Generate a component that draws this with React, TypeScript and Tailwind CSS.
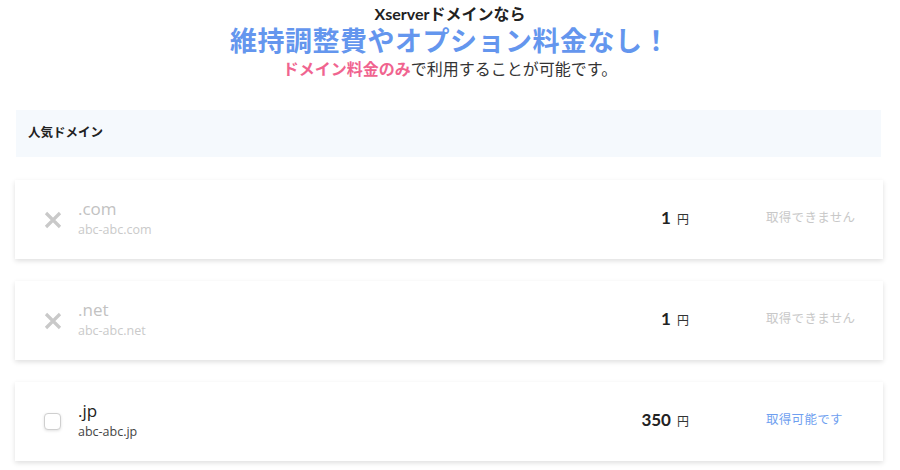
import React from "react"

type Domain = {
  tld: string
  sample: string
  price: string
  available: boolean
}

const domains: Domain[] = [
  { tld: ".com", sample: "abc-abc.com", price: "1", available: false },
  { tld: ".net", sample: "abc-abc.net", price: "1", available: false },
  { tld: ".jp", sample: "abc-abc.jp", price: "350", available: true },
]

const font = "font-['Lato','Noto_Sans_CJK_JP',sans-serif]"
const nameFont = "font-['Open_Sans','Noto_Sans_CJK_JP',sans-serif]"

function DomainCard({ d }: { d: Domain }) {
  return (
    <div className="ml-[15px] mr-[17px] h-[79px] bg-white shadow-[0_2px_5px_rgba(0,0,0,0.13)] flex items-center">
      {/* Icon */}
      <div className="w-[63px] pl-[27px] flex items-center">
        {d.available ? (
          <div className="ml-[2px] w-[17px] h-[17px] rounded-[4px] border border-[#cfcfcf] bg-white shadow-[0_1px_3px_rgba(0,0,0,0.12)]" />
        ) : (
          <svg width="22" height="22" viewBox="0 0 22 22">
            <path d="M4 4 L18 18 M18 4 L4 18" stroke="#c9c9c9" strokeWidth="3.2" strokeLinecap="butt" />
          </svg>
        )}
      </div>

      {/* Name */}
      <div className={`flex-1 flex flex-col -mt-[1px] ${nameFont}`}>
        <span className={`text-[17px] leading-[20px] font-medium ${d.available ? "text-[#222]" : "text-[#c2c2c2]"}`}>
          {d.tld}
        </span>
        <span className={`text-[12.5px] leading-[18px] mt-[2px] ${d.available ? "text-[#444]" : "text-[#cacaca]"}`}>
          {d.sample}
        </span>
      </div>

      {/* Price */}
      <div className="flex items-baseline gap-[6px] -mt-[3px]">
        <span className="text-[17px] font-bold text-[#222]">{d.price}</span>
        <span className="text-[12px] text-[#333]">円</span>
      </div>

      {/* Status */}
      <div className={`w-[117px] ml-[77px] -mt-[3px] text-[12.5px] tracking-[0.3px] ${d.available ? "text-[#6f9ff0]" : "text-[#c8c8c8]"}`}>
        {d.available ? "取得可能です" : "取得できません"}
      </div>
    </div>
  )
}

export default function App() {
  return (
    <div className={`w-[900px] h-[470px] bg-white overflow-hidden ${font}`}>
      {/* Heading */}
      <div className="text-center pt-[4px]">
        <p className="text-[16px] leading-[20px] font-bold text-[#222]">Xserverドメインなら</p>
        <h1 className="text-[27px] leading-[34px] font-bold text-[#6496ee] tracking-[0.5px]">
          維持調整費やオプション料金なし！
        </h1>
        <p className="text-[16px] leading-[22px] text-[#333]">
          <span className="text-[#f0648f] font-bold">ドメイン料金のみ</span>で利用することが可能です。
        </p>
      </div>

      {/* Popular */}
      <div className="mt-[30px] ml-[16px] mr-[19px] h-[47px] bg-[#f5f9fd] flex items-center pl-[12px]">
        <span className="text-[12.5px] font-bold text-[#222]">人気ドメイン</span>
      </div>

      <div className="mt-[23px] flex flex-col gap-[22px]">
        {domains.map((d) => (
          <DomainCard key={d.tld} d={d} />
        ))}
      </div>
    </div>
  )
}
